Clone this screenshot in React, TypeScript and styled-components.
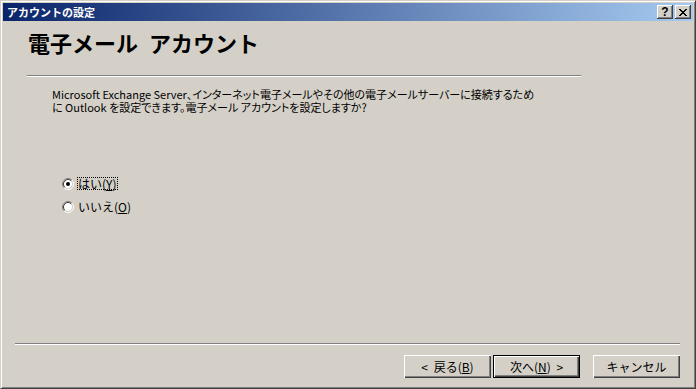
import React from 'react';
import styled, { createGlobalStyle } from 'styled-components';

const GlobalStyle = createGlobalStyle`
  html, body { margin: 0; padding: 0; background: #d4d0c8; }
  body { font-family: "Noto Sans CJK JP", "Noto Sans", sans-serif; }
`;

const Window = styled.div`
  box-sizing: border-box;
  width: 696px;
  height: 389px;
  background: #d4d0c8;
  border: 1px solid;
  border-color: #d4d0c8 #404040 #404040 #d4d0c8;
  box-shadow: inset 1px 1px #fff, inset -1px -1px #808080;
  padding: 2px;
  display: flex;
  flex-direction: column;
  font-family: "Noto Sans CJK JP", sans-serif;
  color: #000;
`;

const TitleBar = styled.div`
  height: 18px;
  flex: none;
  display: flex;
  align-items: center;
  padding: 0 2px;
  background: linear-gradient(to right, #0a246a, #a6caf0);
`;

const TitleText = styled.span`
  margin-left: 2px;
  color: #fff;
  font-size: 11px;
  font-weight: bold;
  line-height: 14px;
  white-space: nowrap;
`;

const TitleButtons = styled.div`
  margin-left: auto;
  display: flex;
  gap: 2px;
`;

const CaptionButton = styled.div`
  box-sizing: border-box;
  width: 16px;
  height: 14px;
  background: #d4d0c8;
  box-shadow: inset -1px -1px #404040, inset 1px 1px #fff, inset -2px -2px #808080;
  display: flex;
  align-items: center;
  justify-content: center;
  font-family: "Liberation Sans", sans-serif;
  font-weight: bold;
  font-size: 12px;
  line-height: 12px;
  color: #000;
`;

const Body = styled.div`
  flex: 1;
  display: flex;
  flex-direction: column;
`;

const Header = styled.div`
  box-sizing: border-box;
  height: 54px;
  padding: 8px 0 0 25px;
`;

const Heading = styled.h1`
  margin: 0;
  font-size: 22px;
  line-height: 26px;
  font-weight: bold;
  word-spacing: 6px;
  white-space: nowrap;
`;

const Rule = styled.div<{ $left: number; $width: number }>`
  flex: none;
  margin-left: ${(p) => p.$left}px;
  width: ${(p) => p.$width}px;
  height: 0;
  border-top: 1px solid #808080;
  border-bottom: 1px solid #fff;
`;

const Description = styled.p`
  margin: 11px 0 0 49px;
  font-size: 11px;
  line-height: 13px;
  font-feature-settings: "palt";
  white-space: nowrap;
`;

const RadioGroup = styled.div`
  margin: 63px 0 0 59px;
  display: flex;
  flex-direction: column;
  gap: 10px;
`;

const RadioRow = styled.div`
  display: flex;
  align-items: center;
  height: 13px;
`;

const RadioLabel = styled.span<{ $focused?: boolean }>`
  margin-left: 3px;
  border: 1px dotted ${(p) => (p.$focused ? '#000' : 'transparent')};
  font-size: 12px;
  line-height: 11px;
  white-space: nowrap;
`;

const Mnemonic = styled.span`
  text-decoration: underline;
  text-underline-offset: 1px;
`;

const Footer = styled.div`
  margin-top: auto;
  display: flex;
  flex-direction: column;
`;

const ButtonRow = styled.div`
  margin: 10px 0 8px;
  padding-right: 13px;
  display: flex;
  justify-content: flex-end;
`;

const Button = styled.button<{ $default?: boolean; $gapBefore?: number }>`
  box-sizing: border-box;
  width: 87px;
  height: 23px;
  margin: 0 0 0 ${(p) => p.$gapBefore ?? 0}px;
  padding: 0;
  background: #d4d0c8;
  font-family: "Noto Sans CJK JP", sans-serif;
  font-size: 12px;
  line-height: 14px;
  word-spacing: 3px;
  color: #000;
  border: ${(p) => (p.$default ? '1px solid #000' : 'none')};
  box-shadow: inset 1px 1px #fff, inset -1px -1px #404040, inset -2px -2px #808080;
  display: flex;
  align-items: center;
  justify-content: center;
  white-space: pre;
`;

const Radio: React.FC<{ checked?: boolean }> = ({ checked }) => (
  <svg width="12" height="12" viewBox="0 0 12 12">
    <circle cx="6" cy="6" r="4.2" fill="#fff" />
    <path d="M2.11 9.89 A5.5 5.5 0 0 1 9.89 2.11" fill="none" stroke="#808080" strokeWidth="1" />
    <path d="M9.89 2.11 A5.5 5.5 0 0 1 2.11 9.89" fill="none" stroke="#fff" strokeWidth="1" />
    <path d="M2.82 9.18 A4.5 4.5 0 0 1 9.18 2.82" fill="none" stroke="#404040" strokeWidth="1" />
    <path d="M9.18 2.82 A4.5 4.5 0 0 1 2.82 9.18" fill="none" stroke="#d4d0c8" strokeWidth="1" />
    {checked && <circle cx="6" cy="6" r="2" fill="#000" />}
  </svg>
);

const CloseGlyph = () => (
  <svg width="8" height="7" viewBox="0 0 8 7" shapeRendering="crispEdges">
    <path
      d="M0 0h2v1h-2z M6 0h2v1h-2z M1 1h2v1h-2z M5 1h2v1h-2z M2 2h4v1h-4z M3 3h2v1h-2z M2 4h4v1h-4z M1 5h2v1h-2z M5 5h2v1h-2z M0 6h2v1h-2z M6 6h2v1h-2z"
      fill="#000"
    />
  </svg>
);

export default function App() {
  return (
    <>
      <GlobalStyle />
      <Window>
        <TitleBar>
          <TitleText>アカウントの設定</TitleText>
          <TitleButtons>
            <CaptionButton>?</CaptionButton>
            <CaptionButton>
              <CloseGlyph />
            </CaptionButton>
          </TitleButtons>
        </TitleBar>
        <Body>
          <Header>
            <Heading>電子メール アカウント</Heading>
          </Header>
          <Rule $left={24} $width={554} />
          <Description>
            Microsoft Exchange Server、インターネット電子メールやその他の電子メールサーバーに接続するため
            <br />
            に Outlook を設定できます。電子メール アカウントを設定しますか?
          </Description>
          <RadioGroup>
            <RadioRow>
              <Radio checked />
              <RadioLabel $focused>
                はい(<Mnemonic>Y</Mnemonic>)
              </RadioLabel>
            </RadioRow>
            <RadioRow>
              <Radio />
              <RadioLabel>
                いいえ(<Mnemonic>O</Mnemonic>)
              </RadioLabel>
            </RadioRow>
          </RadioGroup>
          <Footer>
            <Rule $left={12} $width={665} />
            <ButtonRow>
              <Button>
                {'< 戻る('}
                <Mnemonic>B</Mnemonic>
                {')'}
              </Button>
              <Button $default $gapBefore={2}>
                {'次へ('}
                <Mnemonic>N</Mnemonic>
                {') >'}
              </Button>
              <Button $gapBefore={13}>キャンセル</Button>
            </ButtonRow>
          </Footer>
        </Body>
      </Window>
    </>
  );
}
